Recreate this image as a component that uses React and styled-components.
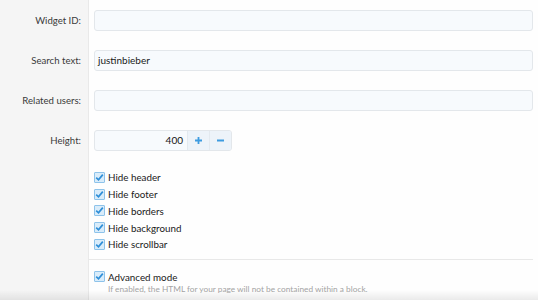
import React from 'react';
import styled, { createGlobalStyle } from 'styled-components';

const Global = createGlobalStyle`
  html, body {
    margin: 0;
    padding: 0;
    background: #fefefe;
    overflow: hidden;
  }
  body {
    font-family: 'Lato', 'Open Sans', sans-serif;
    color: #141414;
  }
`;

// 전체 폼 틀: 왼쪽 라벨 칸 + 오른쪽 입력 칸
const Page = styled.div`
  position: relative;
  width: 538px;
  height: 300px;
  overflow: hidden;
  display: grid;
  grid-template-columns: 88px 1fr;
  align-content: start;
  background: linear-gradient(to right, #f5f5f5 0, #f5f5f5 88px, #e9e9e9 88px, #e9e9e9 89px, #fefefe 89px);
`;

const Label = styled.div`
  grid-column: 1;
  height: 40px;
  padding: 10px 7px 0 0;
  box-sizing: border-box;
  text-align: right;
  font-size: 9.6px;
  color: #3a3a3a;
  line-height: 21px;
`;

const Field = styled.div`
  grid-column: 2;
  height: 40px;
  padding: 10px 5px 0 6px;
  box-sizing: border-box;
`;

const Input = styled.div`
  height: 21px;
  box-sizing: border-box;
  border: 1px solid #e3e7eb;
  border-radius: 3px;
  background: #f7fafd;
  font-size: 10px;
  line-height: 19px;
  padding: 0 3px;
  color: #1a1a1a;
`;

const Spinner = styled.div`
  display: flex;
  width: 138px;
  height: 21px;
  box-sizing: border-box;
  border: 1px solid #e3e7eb;
  border-radius: 3px;
  background: #f7fafd;
  overflow: hidden;
`;

const Number = styled.div`
  flex: 1;
  text-align: right;
  padding-right: 4px;
  font-size: 10px;
  line-height: 19px;
`;

const SpinButton = styled.div`
  width: 21px;
  display: flex;
  align-items: center;
  justify-content: center;
  background: #edf3f9;
  border-left: 1px solid #e3e9ef;
  color: #3d9be0;
`;

const CheckList = styled.div`
  grid-column: 2;
  padding: 9px 0 0 6px;
  display: flex;
  flex-direction: column;
`;

const CheckRow = styled.label`
  display: flex;
  align-items: center;
  gap: 2px;
  height: ${p => p.$h || 16.75}px;
  font-size: 9.8px;
  color: #202020;
`;

const Box = styled.span`
  width: 11px;
  height: 11px;
  box-sizing: border-box;
  border: 1px solid #8ec3ea;
  background: #d9ecfa;
  border-radius: 1px;
  display: inline-flex;
  align-items: center;
  justify-content: center;
  margin-right: 1px;
`;

const Divider = styled.div`
  grid-column: 2;
  margin: 6.5px 5px 0 0;
  border-top: 1px solid #e8e8e8;
`;

const Advanced = styled.div`
  grid-column: 2;
  padding: 9px 0 0 6px;
`;

const Hint = styled.div`
  font-size: 8.3px;
  color: #a4a4a4;
  padding-left: 14px;
  line-height: 11px;
`;

const Shade = styled.div`
  position: absolute;
  left: 0;
  right: 0;
  bottom: 0;
  height: 10px;
  background: linear-gradient(to bottom, rgba(0,0,0,0), rgba(0,0,0,0.08));
  pointer-events: none;
`;

const Check = () => (
  <Box>
    <svg width="9" height="9" viewBox="0 0 9 9">
      <path d="M1.2 4.6 L3.5 6.8 L7.8 1.6" fill="none" stroke="#2f8fd8" strokeWidth="1.7" />
    </svg>
  </Box>
);

const Plus = () => (
  <svg width="9" height="9" viewBox="0 0 9 9">
    <path d="M4.5 1 V8 M1 4.5 H8" stroke="currentColor" strokeWidth="1.8" />
  </svg>
);

const Minus = () => (
  <svg width="9" height="9" viewBox="0 0 9 9">
    <path d="M1 4.5 H8" stroke="currentColor" strokeWidth="1.8" />
  </svg>
);

const options = ['Hide header', 'Hide footer', 'Hide borders', 'Hide background', 'Hide scrollbar'];

export default function App() {
  return (
    <>
      <Global />
      <Page>
        <Label>Widget ID:</Label>
        <Field><Input /></Field>

        <Label>Search text:</Label>
        <Field><Input>justinbieber</Input></Field>

        <Label>Related users:</Label>
        <Field><Input /></Field>

        <Label>Height:</Label>
        <Field>
          <Spinner>
            <Number>400</Number>
            <SpinButton><Plus /></SpinButton>
            <SpinButton><Minus /></SpinButton>
          </Spinner>
        </Field>

        <CheckList>
          {options.map(o => (
            <CheckRow key={o}><Check />{o}</CheckRow>
          ))}
        </CheckList>

        <Divider />

        <Advanced>
          <CheckRow $h={15}><Check />Advanced mode</CheckRow>
          <Hint>If enabled, the HTML for your page will not be contained within a block.</Hint>
        </Advanced>
        <Shade />
      </Page>
    </>
  );
}
